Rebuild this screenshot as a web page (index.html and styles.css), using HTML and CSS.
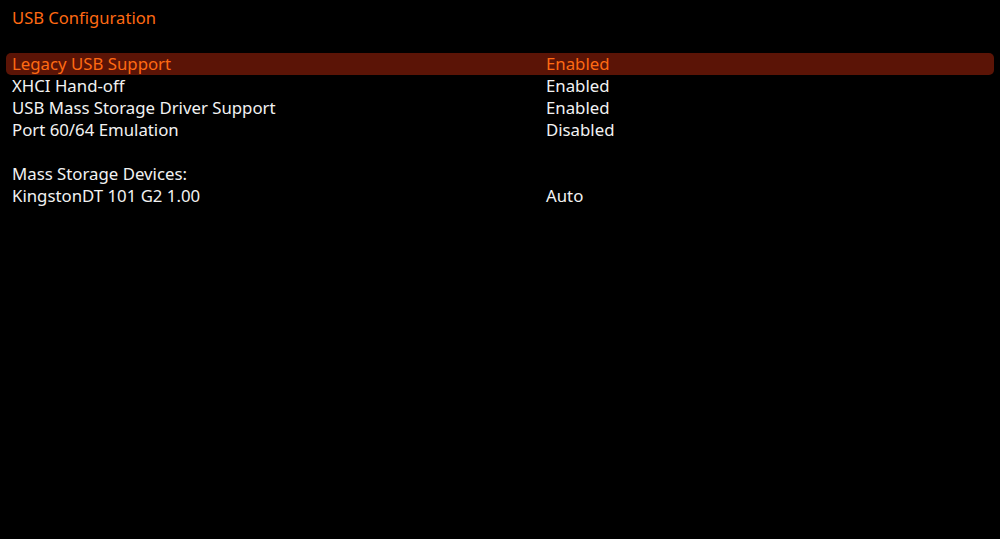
FILE: index.html
```html
<!DOCTYPE html>
<html>
<head>
    <title>USB Configuration</title>
    <link rel="stylesheet" href="styles.css">
</head>
<body>
    <div id="setup">
        <h1 class="page-title">USB Configuration</h1>
        <div class="options">
            <div class="row selected">
                <span class="label">Legacy USB Support</span>
                <span class="value">Enabled</span>
            </div>
            <div class="row">
                <span class="label">XHCI Hand-off</span>
                <span class="value">Enabled</span>
            </div>
            <div class="row">
                <span class="label">USB Mass Storage Driver Support</span>
                <span class="value">Enabled</span>
            </div>
            <div class="row">
                <span class="label">Port 60/64 Emulation</span>
                <span class="value">Disabled</span>
            </div>
            <div class="row blank"></div>
            <div class="row">
                <span class="label">Mass Storage Devices:</span>
            </div>
            <div class="row">
                <span class="label">KingstonDT 101 G2 1.00</span>
                <span class="value">Auto</span>
            </div>
        </div>
    </div>
</body>
</html>
```

FILE: styles.css
```css
body {
    margin: 0;
    background-color: #000;
    color: #f2f2f2;
    font-family: "Noto Sans", "Open Sans", sans-serif;
    font-size: 16.8px;
}
#setup {
    padding: 7px 6px 0 6px;
}
.page-title {
    margin: 0 0 24px 0;
    padding-left: 6px;
    font-size: 16.6px;
    font-weight: normal;
    line-height: 22px;
    color: #ff6a13;
}
.options {
    display: flex;
    flex-direction: column;
}
.row {
    display: flex;
    height: 22px;
    line-height: 21px;
    border-radius: 5px;
}
.row.selected {
    background-color: #5b1406;
    color: #ff6a13;
}
.label {
    width: 534px;
    padding-left: 6px;
}
.value {
    flex: 1;
}
```
